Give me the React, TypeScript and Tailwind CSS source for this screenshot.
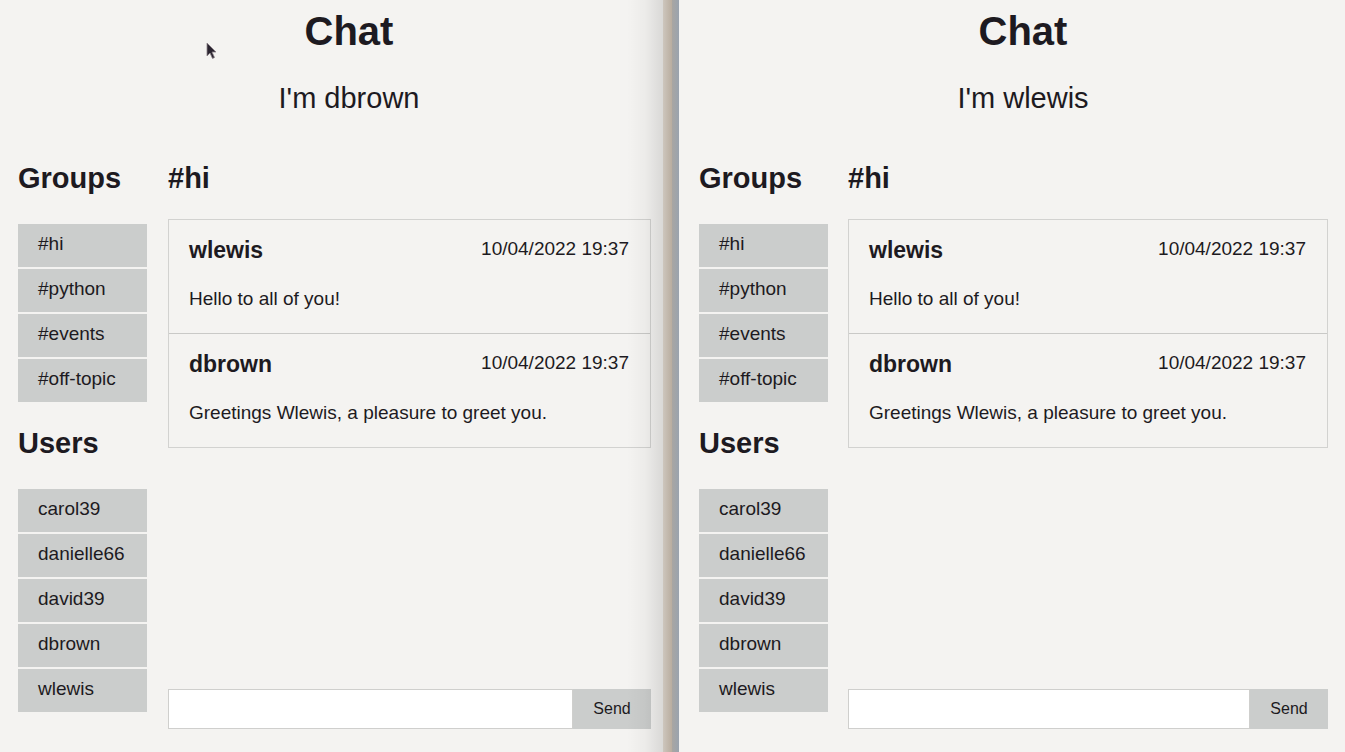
import React from 'react';

const groups = ['#hi', '#python', '#events', '#off-topic'];
const users = ['carol39', 'danielle66', 'david39', 'dbrown', 'wlewis'];

const messages = [
  { user: 'wlewis', date: '10/04/2022 19:37', text: 'Hello to all of you!' },
  { user: 'dbrown', date: '10/04/2022 19:37', text: 'Greetings Wlewis, a pleasure to greet you.' },
];

const ListItem = ({ label }: { label: string }) => (
  <div className="h-[43px] bg-[#cbcdcc] pl-5 pt-[10px] text-[19px] leading-[19px]">{label}</div>
);

type PaneProps = {
  me: string;
  headerPad: string;
  bodyPad: string;
  gap: string;
  mainWidth: string;
};

const ChatPane = ({ me, headerPad, bodyPad, gap, mainWidth }: PaneProps) => {
  return (
    <div className="flex h-full flex-col pb-[23px]">
      <div className={`text-center ${headerPad}`}>
        <h1 className="mt-[11px] text-[40px] font-bold leading-none">Chat</h1>
        <p className="mt-[33px] text-[29px] leading-none">I'm {me}</p>
      </div>
      <div className={`mt-[51px] flex flex-1 ${bodyPad} ${gap}`}>
        <div className="flex w-[129px] flex-col">
          <h2 className="text-[29px] font-bold leading-none">Groups</h2>
          <div className="mt-[31px] flex flex-col gap-[2px]">
            {groups.map((g) => (
              <ListItem key={g} label={g} />
            ))}
          </div>
          <h2 className="mt-[27px] text-[29px] font-bold leading-none">Users</h2>
          <div className="mt-[31px] flex flex-col gap-[2px]">
            {users.map((u) => (
              <ListItem key={u} label={u} />
            ))}
          </div>
        </div>
        <div className={`flex flex-col ${mainWidth}`}>
          <h2 className="text-[29px] font-bold leading-none">#hi</h2>
          <div className="mt-[26px] border border-[#d2d2d0]">
            {messages.map((m, i) => (
              <div
                key={i}
                className={`pb-[25px] pl-5 pr-[21px] pt-[19px] ${i === 0 ? 'border-b border-[#c9c9c7]' : ''}`}
              >
                <div className="flex items-start justify-between">
                  <span className="text-[23px] font-bold leading-none">{m.user}</span>
                  <span className="text-[19px] leading-none">{m.date}</span>
                </div>
                <p className="mt-[27px] text-[19px] leading-none">{m.text}</p>
              </div>
            ))}
          </div>
          <div className="mt-auto flex h-[40px]">
            <input className="h-full flex-1 border border-[#cfcfcd] bg-white outline-none" />
            <button className="h-full w-[78px] bg-[#cbcdcc] text-[16px]">Send</button>
          </div>
        </div>
      </div>
    </div>
  );
};

export default function App() {
  return (
    <div
      className="flex h-[752px] w-[1345px] overflow-hidden bg-[#f4f3f1] text-[#1d1a21]"
      style={{ fontFamily: '"Liberation Sans", Arial, sans-serif' }}
    >
      <div className="relative h-full w-[679px] shrink-0">
        <ChatPane me="dbrown" headerPad="pl-[19px]" bodyPad="pl-[18px]" gap="gap-[21px]" mainWidth="w-[483px]" />
        {/* window shadow of the right browser */}
        <div className="absolute right-[16px] top-0 h-full w-[36px] bg-gradient-to-r from-[#00000000] via-[#00000008] to-[#0000001c]" />
        <div className="absolute right-[7px] top-0 h-full w-[9px] bg-gradient-to-r from-[#cdc6bd] to-[#b9ad9f]" />
        <div className="absolute right-0 top-0 h-full w-[7px] bg-gradient-to-r from-[#a9a6a2] to-[#9aa3ae]" />
        <svg className="absolute left-[206px] top-[42px]" width="11" height="18" viewBox="0 0 11 18">
          <path d="M1 1 L1 14 L4 11 L6.5 16.5 L8.5 15.5 L6 10 L10 10 Z" fill="#2a2430" stroke="#8a8288" strokeWidth="0.8" />
        </svg>
      </div>
      <div className="h-full flex-1">
        <ChatPane me="wlewis" headerPad="pl-[22px]" bodyPad="pl-[20px]" gap="gap-[20px]" mainWidth="w-[480px]" />
      </div>
    </div>
  );
}
